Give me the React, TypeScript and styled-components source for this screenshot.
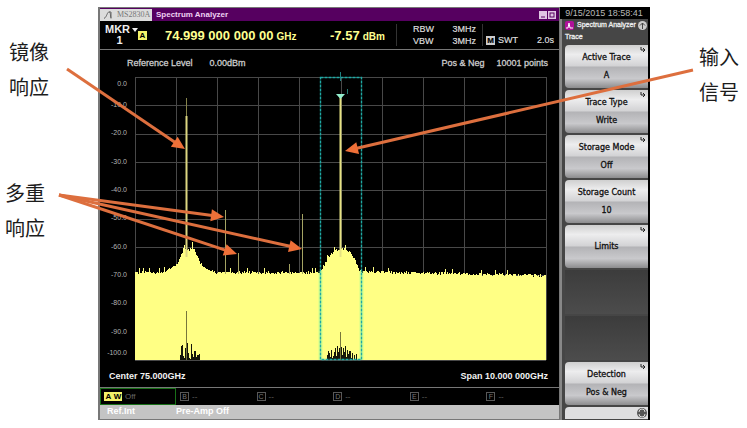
import React from 'react';
import styled, { createGlobalStyle } from 'styled-components';

const Global = createGlobalStyle`
  * { box-sizing: border-box; }
  body { margin: 0; background: #fff; }
  button { font: inherit; color: inherit; padding: 0; border: 0; background: none; cursor: pointer; }
`;

const sans = '"Liberation Sans", Arial, sans-serif';
const trace = '#ffff84';

const Figure = styled.main`
  position: relative;
  display: grid;
  grid-template-columns: 98px minmax(0, 1fr) 97px;
  min-height: 428px;
  font-family: ${sans};
`;

const Notes = styled.aside<{ $right?: boolean }>`
  display: flex;
  flex-direction: column;
  gap: 71px;
  padding: ${p => (p.$right ? '39px 0 0 49px' : '34px 0 0 9px')};
`;

const Note = styled.p<{ $outdent?: boolean }>`
  margin: 0 0 0 ${p => (p.$outdent ? '-4px' : '0')};
  font: 400 20px/35px "Noto Sans CJK SC", sans-serif;
  color: #1c1c1c;
`;

const Instrument = styled.section`
  display: grid;
  grid-template-columns: minmax(0, 1fr) 90px;
  margin: 7px 0 8px;
  background: #000;
`;

const Screen = styled.div`
  display: flex;
  flex-direction: column;
  border: 1px solid #777;
  border-left-width: 2px;
  color: #ddd;
`;

const TitleBar = styled.header`
  display: flex;
  align-items: center;
  height: 13px;
  background: #560060;
`;

const Model = styled.div`
  display: flex;
  align-items: center;
  gap: 4px;
  width: 52px;
  height: 12px;
  padding-left: 4px;
  background: #dcdcdc;
  color: #777;
  font: 400 8px/12px "Liberation Serif", serif;
`;

const AppName = styled.h1`
  flex: 1;
  margin: 0 0 0 4px;
  color: #efd0f2;
  font-size: 8px;
  line-height: 12px;
`;

const WindowButtons = styled.div`
  display: flex;
  gap: 1px;
  padding-right: 3px;
  button { display: flex; width: 8px; height: 8px; background: #dfc6e2; }
`;

const MarkerBar = styled.div`
  display: grid;
  grid-template-columns: 38px 27px 165px 1fr 86px 77px;
  align-items: center;
  height: 29px;
  border-bottom: 1px solid #777;
`;

const MarkerButton = styled.button`
  display: grid;
  grid-template-columns: auto auto;
  align-items: center;
  gap: 0 2px;
  padding-left: 5px;
  color: #eee;
  font-size: 11px;
  font-weight: 700;
  line-height: 11px;
  span { padding-left: 4px; }
`;

const Badge = styled.span<{ $tone?: 'yellow' | 'grey' }>`
  display: inline-block;
  width: 9px;
  height: 9px;
  background: ${p => (p.$tone === 'grey' ? '#ccc' : '#f3f36a')};
  color: #000;
  font-size: 8px;
  font-weight: 700;
  line-height: 9px;
  text-align: center;
`;

const Reading = styled.div`
  display: flex;
  align-items: baseline;
  gap: 3px;
  color: #ffff90;
  font-size: 13px;
  font-weight: 700;
  white-space: nowrap;
  small { font-size: 10px; }
`;

const Settings = styled.dl`
  display: grid;
  grid-template-columns: auto auto;
  justify-content: space-between;
  align-content: center;
  height: 22px;
  margin: 0;
  padding: 0 6px 0 16px;
  border-left: 1px solid #333;
  font-size: 9px;
  line-height: 12px;
  -webkit-text-stroke: 0.2px;
  dt, dd { margin: 0; }
  dt { display: flex; align-items: center; gap: 3px; }
`;

const Sweep = styled(Settings)`
  align-content: end;
  padding: 0 5px 0 3px;
`;

const Caption = styled.div<{ $foot?: boolean }>`
  display: flex;
  gap: ${p => (p.$foot ? '17px' : '12px')};
  height: ${p => (p.$foot ? '28px' : '27px')};
  padding: ${p => (p.$foot ? '10px 11px 0 9px' : '7px 11px 0 27px')};
  color: ${p => (p.$foot ? '#f2f2f2' : '#ccc')};
  font-size: 9px;
  font-weight: ${p => (p.$foot ? 700 : 400)};
  line-height: 12px;
  -webkit-text-stroke: ${p => (p.$foot ? '0' : '0.3px')};
  border-bottom: ${p => (p.$foot ? '1px solid #777' : '0')};
`;

const Level = styled.span`
  margin-left: 5px;
`;

const Push = styled.span`
  margin-left: auto;
`;

const PlotArea = styled.div`
  display: grid;
  grid-template-columns: 35px minmax(0, 1fr);
  flex: 1;
  min-height: 283px;
  padding-right: 13px;
`;

const Scale = styled.ol`
  display: grid;
  grid-template-rows: 14px repeat(9, minmax(0, 1fr)) 14px;
  align-items: center;
  margin: 0;
  padding: 0 8px 0 0;
  list-style: none;
  color: #b4b4b4;
  font-size: 7px;
  line-height: 8px;
  text-align: right;
`;

const Plot = styled.svg`
  display: block;
  width: 100%;
  height: 100%;
  overflow: visible;
`;

const TraceTabs = styled.nav`
  display: grid;
  grid-template-columns: 76px repeat(5, minmax(0, 1fr));
  height: 17px;
`;

const TraceTab = styled.button<{ $active?: boolean }>`
  display: flex;
  align-items: center;
  gap: 3px;
  padding-left: 3px;
  border: 1px solid ${p => (p.$active ? '#187018' : 'transparent')};
  color: #666;
  font-size: 8px;
  line-height: 9px;
`;

const TraceMark = styled.span`
  width: 9px;
  height: 9px;
  border: 1px solid #585858;
  color: #777;
  font-size: 7px;
  line-height: 7px;
  text-align: center;
`;

const StatusBar = styled.footer`
  display: grid;
  grid-template-columns: 69px 1fr;
  height: 14px;
  padding-left: 7px;
  background: #c4c4c4;
  color: #fff;
  font-size: 9px;
  font-weight: 700;
  line-height: 13px;
`;

const SidePanel = styled.aside`
  display: flex;
  flex-direction: column;
  padding-right: 2px;
`;

const Clock = styled.time`
  height: 12px;
  color: #b8b8b8;
  font-size: 9px;
  line-height: 12px;
  text-align: center;
  white-space: nowrap;
`;

const Menu = styled.div`
  display: flex;
  flex: 1;
  flex-direction: column;
  gap: 2px;
  padding-left: 3px;
  border-left: 2px solid #888;
  background: #464646;
`;

const MenuHead = styled.div`
  display: grid;
  grid-template-columns: 9px minmax(0, 1fr) 10px;
  align-items: center;
  gap: 0 3px;
  height: 24px;
  color: #eee;
  font: 400 7px/10px ${sans};
  -webkit-text-stroke: 0.3px;
  white-space: nowrap;
  h2 { margin: 0; font-size: inherit; font-weight: inherit; }
  p { grid-column: 1 / -1; margin: 0; }
`;

const SoftKey = styled.button`
  position: relative;
  display: flex;
  flex-direction: column;
  align-items: center;
  justify-content: center;
  gap: 8px;
  height: 43px;
  border-radius: 4px 0 0 4px;
  background: linear-gradient(#cfcfcf, #ededee 22%, #d2d2d4 49%, #b3b3b6 51%, #c9c9cc 78%, #8c8c8e);
  color: #111;
  font: 400 8px/10px "DejaVu Sans", sans-serif;
  -webkit-text-stroke: 0.3px #111;
  white-space: nowrap;
`;

const Corner = styled.svg`
  position: absolute;
  top: 2px;
  right: 2px;
`;

const Spacer = styled.div`
  flex: 1;
  background: linear-gradient(#3c3c3c, #4c4c4c);
`;

const PageKey = styled.button`
  display: flex;
  align-items: center;
  justify-content: flex-end;
  height: 12px;
  margin-bottom: 1px;
  border-radius: 4px 0 0 0;
  background: #dedee0;
`;

const Arrows = styled.svg`
  position: absolute;
  inset: 0;
  width: 100%;
  height: 100%;
  pointer-events: none;
`;

const W = 411;
const H = 283;

// Noise floor as [x, y] control points, in plot units.
const floor: [number, number][] = [
  [0, 196], [28, 196], [36, 191], [42, 187], [46, 177], [48, 173], [54, 173], [57, 170], [61, 177],
  [65, 186], [71, 192], [80, 196], [184, 196], [189, 188], [194, 179], [199, 175], [205, 172],
  [211, 173], [217, 178], [221, 187], [225, 195], [320, 197], [411, 199],
];

const at = (x: number) => {
  const i = Math.max(1, floor.findIndex(p => p[0] >= x));
  const [x0, y0] = floor[i - 1];
  const [x1, y1] = floor[i];
  return y0 + ((y1 - y0) * (x - x0)) / (x1 - x0);
};

const noise = (n: number) => {
  const s = Math.sin(n * 127.1 + 11.7) * 43758.5453;
  return s - Math.floor(s);
};

let outline = `M0 ${H}`;
for (let x = 0; x < W; x += 1) {
  const r = noise(x);
  const y = Math.round(at(x) - (r > 0.95 ? 6 : r * 3) + 1);
  outline += `V${y}H${x + 1}`;
}
outline += `V${H}Z`;

const cluster = (from: number, heights: number[]) =>
  heights.map((h, i) => (h ? `M${from + i} ${H}v${-h}h1v${h}z` : '')).join('');

const minima =
  cluster(45, [5, 14, 15, 4, 2, 12, 18, 17, 7, 2, 1, 16, 6, 3, 9, 9, 3, 5, 5, 6]) +
  cluster(192, [5, 9, 7, 3, 10, 2, 4, 8, 12, 4, 14, 8, 12, 26, 13, 5, 12, 8, 14, 3, 10, 6, 9, 9, 2, 7, 0, 5, 0, 6]);

const spurs: [number, number][] = [[90, 133], [103, 176], [154, 187], [167, 137]];

function Spectrum() {
  const lines = Array.from({ length: 11 }, (_, i) => i);
  return (
    <Plot viewBox={`0 0 ${W} ${H}`} preserveAspectRatio="none" role="img" aria-label="Spectrum trace">
      <g stroke="#484848" strokeWidth="1">
        {lines.map(i => <path key={`v${i}`} d={`M${Math.round(i * 41.1) + 0.5} 0V${H}`} />)}
        {lines.map(i => <path key={`h${i}`} d={`M0 ${Math.round(i * 28.3) + 0.5}H${W}`} />)}
      </g>
      <path d={outline} fill={trace} />
      {spurs.map(([x, y]) => <path key={x} d={`M${x + 0.5} ${y}V197`} stroke="#a5a463" />)}
      <path d="M51.5 21V40" stroke="#85834b" />
      <path d="M51.5 39V180" stroke="#dcd681" strokeWidth="2" />
      <path d="M205.5 20V180" stroke="#e6e282" strokeWidth="2" />
      <path d={minima} fill="#16160a" />
      <path d="M51.5 234V283M205.5 255V283" stroke="#77763b" />
      <path d="M185.5 194V283M226.5 194V283" stroke="#8cff9c" strokeWidth="4" strokeOpacity="0.4" />
      <rect x="185.5" y="0.5" width="41" height="282" fill="none" stroke="#1fa9a4" strokeWidth="1.4" strokeDasharray="3 1" />
      <path d="M205.5 -5V4" stroke="#1e8080" />
      <path d="M201 17h9l-4.500 5z" fill="#94f0cf" />
      <path d="M212.500 12v5" stroke="#267a70" />
    </Plot>
  );
}

function Arrow({ from, to }: { from: [number, number]; to: [number, number] }) {
  const a = Math.atan2(to[1] - from[1], to[0] - from[0]);
  const len = Math.hypot(to[1] - from[1], to[0] - from[0]);
  return (
    <g transform={`translate(${from[0]} ${from[1]}) rotate(${(a * 180) / Math.PI})`}>
      <path d={`M0 0H${len - 10}`} stroke="#dd6f3e" strokeWidth="3" />
      <path d={`M${len} 0l-13 -6v12z`} fill="#ef7038" />
    </g>
  );
}

function Key({ label, value, arrow = true }: { label: string; value?: string; arrow?: boolean }) {
  return (
    <SoftKey type="button">
      <span>{label}</span>
      {value && <span>{value}</span>}
      {arrow && (
        <Corner width="6" height="6" viewBox="0 0 6 6" fill="none" stroke="#222">
          <path d="M1 0v3h4M3 1l2 2-2 2" />
        </Corner>
      )}
    </SoftKey>
  );
}

export default function App() {
  return (
    <>
      <Global />
      <Figure>
        <Notes>
          <Note>镜像<br />响应</Note>
          <Note $outdent>多重<br />响应</Note>
        </Notes>
        <Instrument>
          <Screen>
            <TitleBar>
              <Model>
                <svg width="9" height="8" viewBox="0 0 9 8" fill="none" stroke="#666">
                  <path d="M0 7.500C3 6 3 1 5 1s1 3 2 6.500M5 1h2v6" />
                </svg>
                MS2830A
              </Model>
              <AppName>Spectrum Analyzer</AppName>
              <WindowButtons>
                <button type="button" aria-label="Minimize">
                  <svg width="8" height="8"><path d="M2 6h4" stroke="#560060" /></svg>
                </button>
                <button type="button" aria-label="Maximize">
                  <svg width="8" height="8"><rect x="2" y="2" width="4" height="4" fill="none" stroke="#560060" /></svg>
                </button>
              </WindowButtons>
            </TitleBar>
            <MarkerBar>
              <MarkerButton type="button">
                MKR
                <svg width="6" height="4"><path d="M0 0h6L3 4z" fill="#eee" /></svg>
                <span>1</span>
              </MarkerButton>
              <Badge>A</Badge>
              <Reading>74.999 000 000 00 <small>GHz</small></Reading>
              <Reading>-7.57 <small>dBm</small></Reading>
              <Settings>
                <dt>RBW</dt><dd>3MHz</dd>
                <dt>VBW</dt><dd>3MHz</dd>
              </Settings>
              <Sweep>
                <dt><Badge $tone="grey">M</Badge>SWT</dt><dd>2.0s</dd>
              </Sweep>
            </MarkerBar>
            <Caption>
              <span>Reference Level</span>
              <Level>0.00dBm</Level>
              <Push>Pos &amp; Neg</Push>
              <span>10001 points</span>
            </Caption>
            <PlotArea>
              <Scale>
                {Array.from({ length: 11 }, (_, i) => <li key={i}>{(i ? -i * 10 : 0).toFixed(1)}</li>)}
              </Scale>
              <Spectrum />
            </PlotArea>
            <Caption $foot>
              <span>Center 75.000GHz</span>
              <Push>Span 10.000 000GHz</Push>
            </Caption>
            <TraceTabs>
              <TraceTab type="button" $active>
                <span><Badge>A</Badge><Badge>W</Badge></span>Off
              </TraceTab>
              {['B', 'C', 'D', 'E', 'F'].map(t => (
                <TraceTab type="button" key={t}><TraceMark>{t}</TraceMark>--</TraceTab>
              ))}
            </TraceTabs>
            <StatusBar>
              <span>Ref.Int</span>
              <span>Pre-Amp Off</span>
            </StatusBar>
          </Screen>
          <SidePanel>
            <Clock>9/15/2015 18:58:41</Clock>
            <Menu>
              <MenuHead>
                <svg width="9" height="9" viewBox="0 0 9 9">
                  <rect width="9" height="9" rx="2" fill="#b0109a" />
                  <path d="M1 7h2l1-5 1 5h3" fill="none" stroke="#fff" />
                </svg>
                <h2>Spectrum Analyzer</h2>
                <svg width="9" height="9" viewBox="0 0 9 9">
                  <circle cx="4.500" cy="4.500" r="4.500" fill="#ccc" />
                  <path d="M4.500 8V2M2 4.500L4.500 2 7 4.500" fill="none" stroke="#444" />
                </svg>
                <p>Trace</p>
              </MenuHead>
              <Key label="Active Trace" value="A" />
              <Key label="Trace Type" value="Write" />
              <Key label="Storage Mode" value="Off" />
              <Key label="Storage Count" value="10" arrow={false} />
              <Key label="Limits" />
              <Spacer />
              <Spacer />
              <Key label="Detection" value="Pos &amp; Neg" />
              <PageKey type="button" aria-label="Next page">
                <svg width="12" height="12" viewBox="0 0 12 12">
                  <circle cx="6" cy="6" r="5" fill="#555" />
                  <path d="M3 5a3 3 0 0 1 6 0M9 7a3 3 0 0 1-6 0" fill="none" stroke="#ddd" />
                </svg>
              </PageKey>
            </Menu>
          </SidePanel>
        </Instrument>
        <Notes $right>
          <Note>输入<br />信号</Note>
        </Notes>
        <Arrows viewBox="0 0 747 428" preserveAspectRatio="none" aria-hidden="true">
          <Arrow from={[67, 69]} to={[185, 149]} />
          <Arrow from={[59, 195]} to={[224, 217]} />
          <Arrow from={[59, 195]} to={[302, 249]} />
          <Arrow from={[59, 195]} to={[237, 254]} />
          <Arrow from={[693, 70]} to={[345, 151]} />
        </Arrows>
      </Figure>
    </>
  );
}
